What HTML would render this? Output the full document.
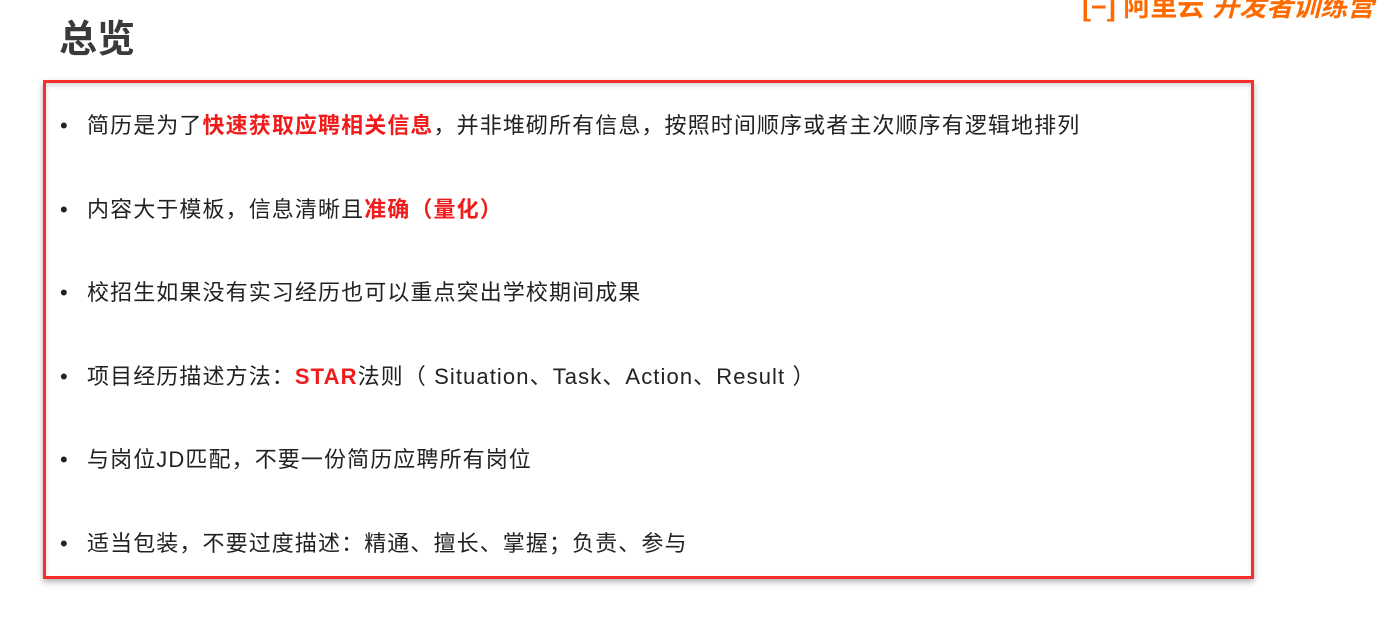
<!DOCTYPE html>
<html><head><meta charset="utf-8"><style>
body{margin:0;width:1386px;height:618px;background:#fff;position:relative;overflow:hidden;font-family:"Liberation Sans","Noto Sans CJK SC",sans-serif;}
.title{position:absolute;left:59px;top:16px;font-size:38px;font-weight:bold;color:#3a3a3a;line-height:48px;}
.logo{position:absolute;left:1082px;top:-10px;font-size:27px;color:#ff6a00;font-weight:bold;line-height:34px;white-space:nowrap;}
.logo i{font-style:italic;margin-left:8px;}
.box{position:absolute;left:43px;top:80px;width:1205px;height:493px;border:3px solid #fb2c2c;box-shadow:0 3px 6px rgba(0,0,0,.3), inset 0 3px 5px rgba(0,0,0,.15);}
.li{position:absolute;left:14px;font-size:22px;letter-spacing:1.1px;color:#222;line-height:30px;white-space:nowrap;}
.li b.r{color:#f01c1c;}
.dot{display:inline-block;width:27px;}
</style></head><body>
<div class="title">总览</div>
<div class="logo">[−] 阿里云<i>开发者训练营</i></div>
<div class="box">
<div class="li" style="top:28px"><span class="dot">•</span>简历是为了<b class="r">快速获取应聘相关信息</b>，并非堆砌所有信息，按照时间顺序或者主次顺序有逻辑地排列</div>
<div class="li" style="top:112px"><span class="dot">•</span>内容大于模板，信息清晰且<b class="r">准确（量化）</b></div>
<div class="li" style="top:195px"><span class="dot">•</span>校招生如果没有实习经历也可以重点突出学校期间成果</div>
<div class="li" style="top:279px"><span class="dot">•</span>项目经历描述方法：<b class="r">STAR</b>法则（ Situation、Task、Action、Result ）</div>
<div class="li" style="top:362px"><span class="dot">•</span>与岗位JD匹配，不要一份简历应聘所有岗位</div>
<div class="li" style="top:446px"><span class="dot">•</span>适当包装，不要过度描述：精通、擅长、掌握；负责、参与</div>
</div>
</body></html>
